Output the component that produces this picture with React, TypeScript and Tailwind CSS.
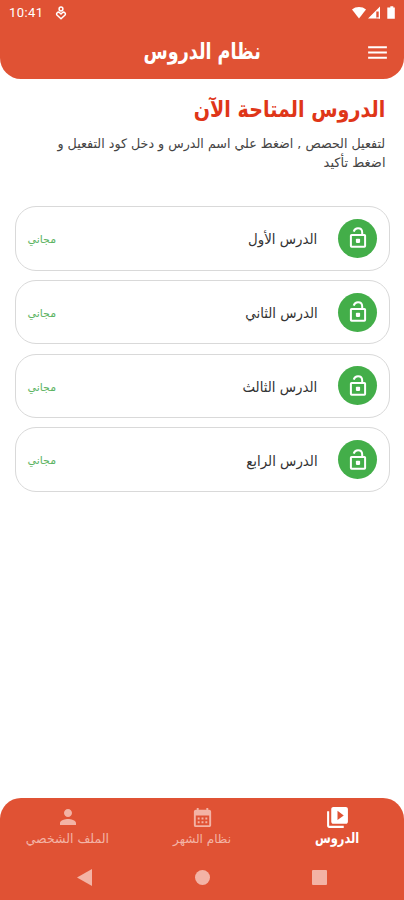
import { MdCalendarMonth, MdMenu, MdPerson, MdVideoLibrary } from "react-icons/md"

const LESSONS = ["الدرس الأول", "الدرس الثاني", "الدرس الثالث", "الدرس الرابع"]

function UnlockIcon() {
  return (
    <svg viewBox="0 0 20 24" className="ms-[-1px] h-6 w-5" fill="none" stroke="white" strokeWidth="2">
      <path d="M5.700 5.600C6.400 3.400 7.900 2.300 10 2.300c2.600 0 4.200 1.700 4.200 4.200V9" />
      <rect x="2.900" y="8.900" width="14.200" height="11.800" rx="0.700" />
      <rect x="7.900" y="12.700" width="4.200" height="4.200" rx="0.800" fill="white" stroke="none" />
    </svg>
  )
}

function StatusBar() {
  return (
    <div dir="ltr" className="flex h-[25px] items-center pl-[9px] pr-[7px]">
      <span className="font-['Roboto',sans-serif] text-[13px] leading-none tracking-[0.4px]">10:41</span>
      <svg viewBox="0 0 12 14" className="ml-3 h-[14px] w-3" fill="none" stroke="currentColor" strokeWidth="1.5">
        <circle cx="6" cy="3" r="1.900" />
        <path d="M6 12.700L2.200 9.300C.6 7.500 3 5.200 4.700 6.700L6 8l1.300-1.300c1.700-1.500 4.100.8 2.500 2.600z" />
      </svg>
      <svg viewBox="0 0 46 14" className="ml-auto h-[14px] w-[46px]" fill="currentColor">
        <path d="M1 3.500C4.800.2 11.200.2 15 3.500L8 12.500z" />
        <path d="M17 12.500L29 .5v12h-1.300V5.500h-2.400v7z" />
        <path d="M25.300 11.400h3.700v1.100h-3.700z" />
        <path d="M37.800 1.500h1.500V.2h3v1.300h1.500v11.300h-7.500V1.500z" />
      </svg>
    </div>
  )
}

function LessonCard({ title }: { title: string }) {
  return (
    <li className="flex h-[64.500px] items-center rounded-[21px] border border-[#d9d9d9] px-3">
      <span className="flex size-[39px] items-center justify-center rounded-full bg-[#43ae49]">
        <UnlockIcon />
      </span>
      <span className="ms-5 mt-1 origin-right scale-x-[0.92] text-[14.500px] text-[#333]">{title}</span>
      <span className="ms-auto mt-1 text-[11px] text-[#5cb463]">مجاني</span>
    </li>
  )
}

export default function App() {
  return (
    <div
      dir="rtl"
      className="flex h-[900px] w-[404px] flex-col overflow-hidden bg-white font-['DejaVu_Sans',sans-serif]"
    >
      <header className="h-[79px] rounded-b-[21px] bg-[#e05234] text-white">
        <StatusBar />
        <div className="grid h-[54px] grid-cols-[40px_1fr_40px] items-center">
          <MdMenu className="ms-[14px] size-[25px]" />
          <h1 className="text-center text-[22.500px] font-bold whitespace-nowrap">
            <span className="inline-block scale-x-[0.78]">نظام الدروس</span>
          </h1>
        </div>
      </header>

      <main className="flex-1 px-[14.500px]">
        <div className="h-[127px] px-1 pt-[15px]">
          <h2 className="flex h-[32px] items-center text-[22.500px] font-bold whitespace-nowrap text-[#df3618]">
            <span className="origin-right scale-x-[0.85]">الدروس المتاحة الآن</span>
          </h2>
          <p className="mt-[8px] text-[13px] leading-[19px] whitespace-nowrap text-[#444]">
            <span className="inline-block origin-right scale-x-[0.975]">
              لتفعيل الحصص , اضغط علي اسم الدرس و دخل كود التفعيل و
            </span>
            <br />
            <span className="inline-block">اضغط تأكيد</span>
          </p>
        </div>
        <ul className="flex flex-col gap-[9.300px]">
          {LESSONS.map((title) => (
            <LessonCard key={title} title={title} />
          ))}
        </ul>
      </main>

      <footer className="h-[102px] rounded-t-[21px] bg-[#e05234] text-[#f3b3a5]">
        <nav className="grid h-[56px] grid-cols-3">
          <div className="flex flex-col items-center pt-[7px] text-white">
            <MdVideoLibrary className="me-[-2px] size-[25px] translate-x-0.5" />
            <span className="scale-x-[0.79] text-[14.500px] leading-4 font-bold">الدروس</span>
          </div>
          <div className="flex flex-col items-center pt-2">
            <MdCalendarMonth className="size-[23px]" />
            <span className="mt-0.5 text-[12px] leading-4">نظام الشهر</span>
          </div>
          <div className="flex flex-col items-center pt-[7px]">
            <MdPerson className="size-6 translate-x-px" />
            <span className="mt-0.5 text-[12.500px] leading-4">الملف الشخصي</span>
          </div>
        </nav>
        <div dir="ltr" className="flex h-[46px] items-center justify-between px-[77px]">
          <svg viewBox="0 0 15 17" className="h-[17px] w-[15px]" fill="currentColor">
            <path d="M15 0v17L0 8.500z" />
          </svg>
          <span className="size-[15px] rounded-full bg-current" />
          <span className="size-[15px] rounded-[1px] bg-current" />
        </div>
      </footer>
    </div>
  )
}
